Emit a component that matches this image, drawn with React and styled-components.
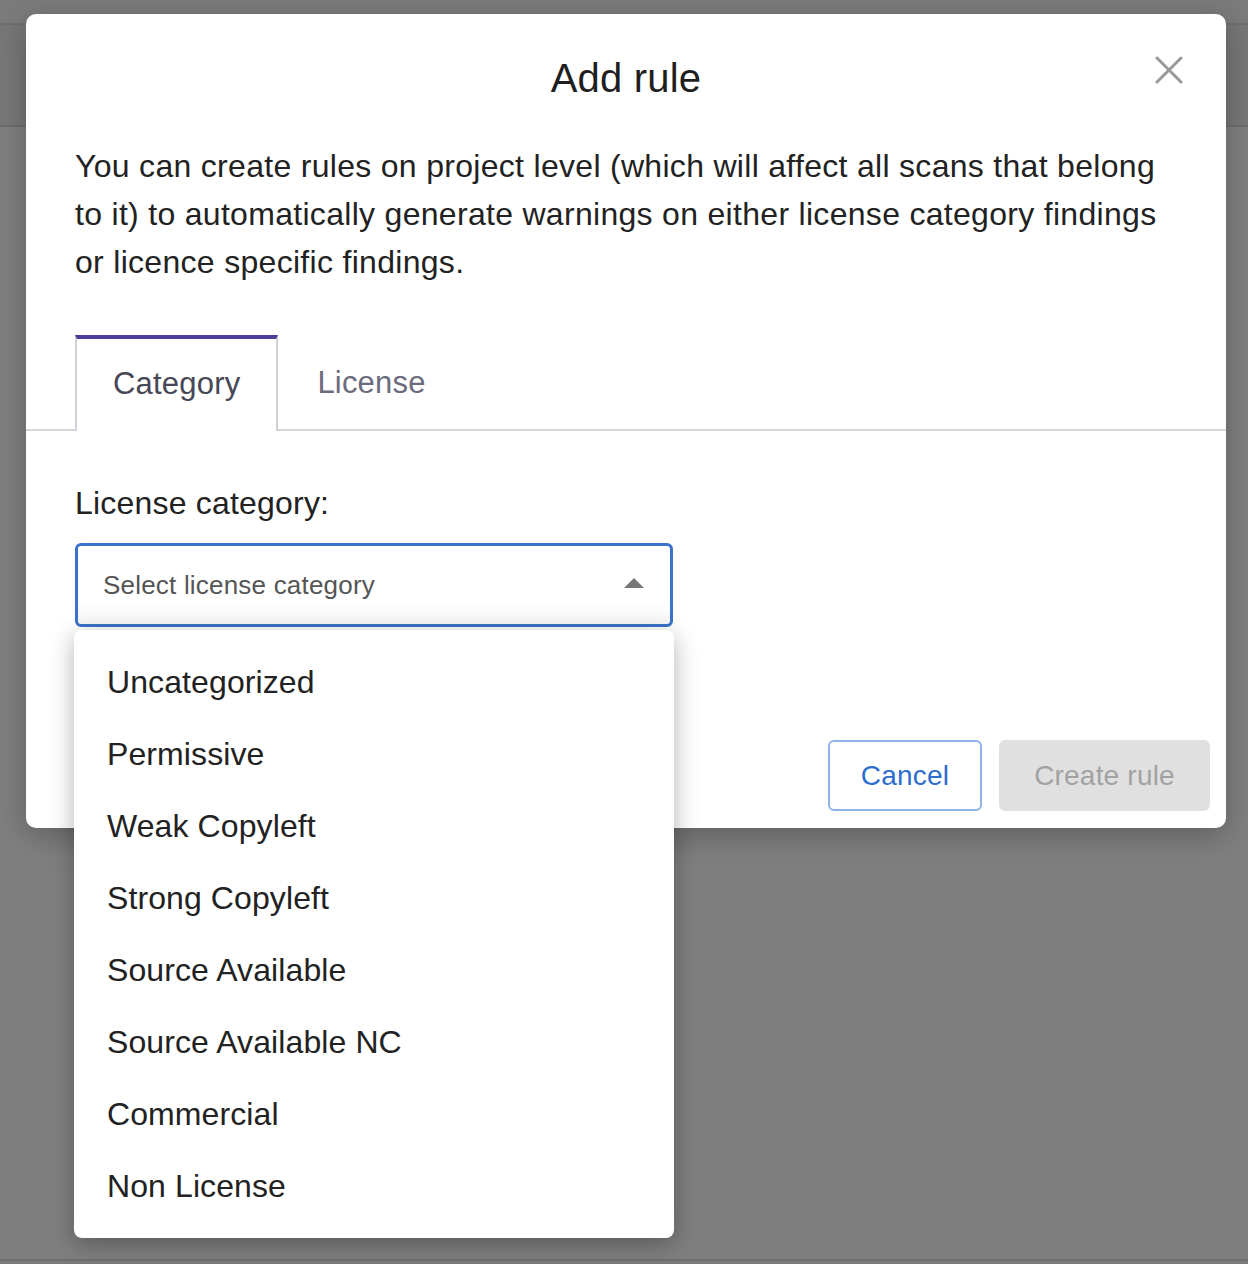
import React from "react";
import styled, { createGlobalStyle } from "styled-components";

const Global = createGlobalStyle`
  html, body { margin: 0; padding: 0; }
  body {
    width: 1248px;
    height: 1264px;
    overflow: hidden;
    font-family: "Liberation Sans", Arial, Helvetica, sans-serif;
    background: linear-gradient(
      to bottom,
      #7b7b7b 0px, #7b7b7b 23px,
      #6f6f6f 23px, #6f6f6f 25px,
      #777777 25px, #777777 125px,
      #6d6d6d 125px, #6d6d6d 127px,
      #7f7f7f 127px, #7f7f7f 1259px,
      #6e6e6e 1259px, #6e6e6e 1261px,
      #7b7b7b 1261px
    );
  }
  * { box-sizing: border-box; }
`;

const Modal = styled.div`
  width: 1200px;
  margin: 14px 0 0 26px;
  background: #ffffff;
  border-radius: 10px;
  box-shadow: 0 8px 30px rgba(0, 0, 0, 0.25);
  padding: 40px 0 17px;
  display: flex;
  flex-direction: column;
`;

const Header = styled.div`
  display: grid;
  grid-template-columns: 1fr auto 1fr;
  align-items: center;
  padding: 0 40px;
  height: 48px;
`;

const Title = styled.h2`
  grid-column: 2;
  margin: 0;
  font-size: 40px;
  line-height: 48px;
  font-weight: 400;
  letter-spacing: 0.2px;
  color: #1f1f1f;
`;

const CloseButton = styled.button`
  grid-column: 3;
  justify-self: end;
  align-self: start;
  margin-top: 0;
  margin-right: 1px;
  width: 32px;
  height: 32px;
  padding: 0;
  border: none;
  background: none;
  display: flex;
  align-items: center;
  justify-content: center;
  cursor: pointer;
`;

const Description = styled.p`
  margin: 40px 0 0;
  padding: 0 51px 0 49px;
  font-size: 32px;
  line-height: 48px;
  letter-spacing: 0.3px;
  color: #222222;
`;

const TabStrip = styled.div`
  margin-top: 49px;
  padding-left: 49px;
  display: flex;
  border-bottom: 2px solid #d4d4da;
`;

const Tab = styled.div`
  height: ${(p) => (p.$active ? "96px" : "94px")};
  margin-bottom: ${(p) => (p.$active ? "-2px" : "0")};
  padding: 0 ${(p) => (p.$active ? "36px" : "37px")} 2px;
  display: flex;
  align-items: center;
  font-size: 31px;
  letter-spacing: 0.2px;
  color: ${(p) => (p.$active ? "#474757" : "#6b6b7d")};
  background: ${(p) => (p.$active ? "#ffffff" : "transparent")};
  border-top: 4px solid ${(p) => (p.$active ? "#4a3f99" : "transparent")};
  border-left: 2px solid ${(p) => (p.$active ? "#d0d0d6" : "transparent")};
  border-right: 2px solid ${(p) => (p.$active ? "#d0d0d6" : "transparent")};
`;

const Body = styled.div`
  padding: 48px 49px 0;
`;

const Label = styled.div`
  font-size: 32px;
  line-height: 48px;
  letter-spacing: 0.2px;
  color: #222222;
`;

const SelectWrap = styled.div`
  position: relative;
  width: 598px;
  margin-top: 16px;
`;

const SelectBox = styled.div`
  height: 84px;
  border: 3px solid #3a73c9;
  border-radius: 6px;
  background: linear-gradient(to bottom, #ffffff 70%, #f7f7f7 100%);
  display: flex;
  align-items: center;
  justify-content: space-between;
  padding: 0 26px 0 25px;
`;

const Placeholder = styled.span`
  font-size: 26px;
  letter-spacing: 0.2px;
  color: #555555;
`;

const Caret = styled.span`
  width: 0;
  height: 0;
  border-left: 10px solid transparent;
  border-right: 10px solid transparent;
  border-bottom: 10px solid #777777;
  margin-top: -4px;
`;

const Menu = styled.ul`
  position: absolute;
  left: -1px;
  top: 87px;
  width: 600px;
  margin: 0;
  padding: 16px 0;
  list-style: none;
  background: #ffffff;
  border-radius: 8px;
  box-shadow: 0 6px 24px rgba(0, 0, 0, 0.3);
  z-index: 10;
`;

const MenuItem = styled.li`
  height: 72px;
  display: flex;
  align-items: center;
  padding-left: 33px;
  font-size: 32px;
  letter-spacing: 0.1px;
  color: #222222;
`;

const Footer = styled.div`
  display: flex;
  justify-content: flex-end;
  gap: 17px;
  padding: 0 16px;
  margin-top: 113px;
`;

const Button = styled.button`
  width: ${(p) => (p.$primary ? "211px" : "154px")};
  height: 71px;
  padding: 0;
  font-family: inherit;
  font-size: 28px;
  letter-spacing: 0.2px;
  border-radius: 6px;
  border: 2px solid ${(p) => (p.$primary ? "#e0e0e0" : "#8fb2e7")};
  background: ${(p) => (p.$primary ? "#e0e0e0" : "#ffffff")};
  color: ${(p) => (p.$primary ? "#a2a2a2" : "#2d6dcd")};
`;

const categories = [
  "Uncategorized",
  "Permissive",
  "Weak Copyleft",
  "Strong Copyleft",
  "Source Available",
  "Source Available NC",
  "Commercial",
  "Non License",
];

export default function App() {
  return (
    <>
      <Global />
      <Modal>
        <Header>
          <Title>Add rule</Title>
          <CloseButton aria-label="Close">
            <svg width="28" height="28" viewBox="0 0 28 28">
              <path d="M2 2 L26 26 M26 2 L2 26" stroke="#999999" strokeWidth="3" strokeLinecap="round" />
            </svg>
          </CloseButton>
        </Header>
        <Description>
          You can create rules on project level (which will affect all scans that belong
          to it) to automatically generate warnings on either license category findings
          or licence specific findings.
        </Description>
        <TabStrip>
          <Tab $active>Category</Tab>
          <Tab>License</Tab>
        </TabStrip>
        <Body>
          <Label>License category:</Label>
          <SelectWrap>
            <SelectBox>
              <Placeholder>Select license category</Placeholder>
              <Caret />
            </SelectBox>
            <Menu>
              {categories.map((c) => (
                <MenuItem key={c}>{c}</MenuItem>
              ))}
            </Menu>
          </SelectWrap>
        </Body>
        <Footer>
          <Button>Cancel</Button>
          <Button $primary>Create rule</Button>
        </Footer>
      </Modal>
    </>
  );
}
